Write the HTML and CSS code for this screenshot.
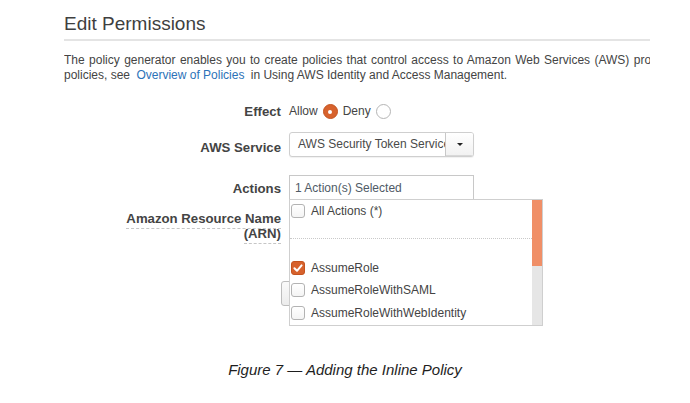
FILE: index.html
```html
<!DOCTYPE html>
<html>
<head>
<meta charset="utf-8">
<link rel="stylesheet" href="styles.css">
</head>
<body>
<div class="page">
  <h1 class="title">Edit Permissions</h1>
  <p class="intro"><span class="justified">The policy generator enables you to create policies that control access to Amazon Web Services (AWS) products and resources. For more</span><br>policies, see <a class="link" href="#">Overview of Policies</a> in Using AWS Identity and Access Management.</p>
  <div class="form">
    <div class="row row-effect">
      <div class="label">Effect</div>
      <div class="field radios">
        <span class="opt">Allow</span><span class="radio on"></span>
        <span class="opt">Deny</span><span class="radio"></span>
      </div>
    </div>
    <div class="row row-service">
      <div class="label">AWS Service</div>
      <div class="field">
        <div class="select">
          <div class="select-text">AWS Security Token Service</div>
          <div class="select-btn"><span class="caret"></span></div>
        </div>
      </div>
    </div>
    <div class="row row-actions">
      <div class="label">Actions</div>
      <div class="field actions-field">
        <div class="input">1 Action(s) Selected</div>
        <div class="menu">
          <div class="menu-list">
            <div class="item"><span class="check"></span>All Actions (*)</div>
            <div class="sep"></div>
            <div class="item"><span class="check on"><svg viewBox="0 0 14 14" width="14" height="14"><path d="M3.4 7.2 L6 9.8 L10.6 4.4" fill="none" stroke="#fff" stroke-width="2" stroke-linecap="round" stroke-linejoin="round"/></svg></span>AssumeRole</div>
            <div class="item"><span class="check"></span>AssumeRoleWithSAML</div>
            <div class="item"><span class="check"></span>AssumeRoleWithWebIdentity</div>
          </div>
          <div class="scrollbar"><div class="thumb"></div></div>
        </div>
      </div>
    </div>
    <div class="row row-arn">
      <div class="label arn-label"><span class="dotted">Amazon Resource Name<br>(ARN)</span></div>
      <div class="field"></div>
    </div>
    <div class="row row-button">
      <button class="btn" type="button">Add Statement</button>
    </div>
  </div>
</div>
<p class="caption">Figure 7 — Adding the Inline Policy</p>
</body>
</html>
```

FILE: styles.css
```css
html, body {
  margin: 0;
  padding: 0;
  background: #ffffff;
}

body {
  font-family: "Liberation Sans", Arial, sans-serif;
  color: #444;
}

.page {
  width: 586px;
  margin-left: 64px;
}

.title {
  margin: 0;
  padding: 13px 0 4px;
  font-size: 19px;
  line-height: 22px;
  font-weight: normal;
  color: #3f3f3f;
  border-bottom: 2px solid #e4e4e4;
}

.intro {
  margin: 12px 0 0;
  font-size: 12px;
  line-height: 15px;
  white-space: nowrap;
  overflow: hidden;
  color: #444;
}

.justified {
  word-spacing: 1.05px;
}

.link {
  color: #2c72b8;
  text-decoration: none;
  padding: 0 3px;
}

.form {
  position: relative;
}

.row {
  display: flex;
  align-items: flex-start;
}

.label {
  width: 217px;
  flex: none;
  text-align: right;
  font-size: 13.2px;
  font-weight: bold;
  line-height: 15px;
  color: #444;
}

.field {
  margin-left: 8px;
  font-size: 12px;
  color: #444;
}

.row-effect {
  margin-top: 20px;
  height: 17px;
}

.row-effect .label {
  line-height: 17px;
}

.radios {
  display: flex;
  align-items: center;
  height: 17px;
  line-height: 17px;
}

.opt {
  margin-right: 5px;
}

.radio {
  width: 13px;
  height: 13px;
  border-radius: 50%;
  border: 1px solid #b5b5b5;
  background: #fff;
  margin-right: 5px;
  box-sizing: content-box;
  position: relative;
}

.radio.on {
  background: #d7622d;
  border-color: #c4531f;
}

.radio.on::after {
  content: "";
  position: absolute;
  left: 4.5px;
  top: 4.5px;
  width: 4px;
  height: 4px;
  border-radius: 50%;
  background: #fff;
}

.row-service {
  margin-top: 12px;
}

.row-service .label {
  padding-top: 8px;
}

.select {
  width: 185px;
  height: 25px;
  box-sizing: border-box;
  border: 1px solid #cfcfcf;
  border-radius: 3px;
  display: flex;
  background: #fff;
  box-shadow: 0 1px 1px rgba(0, 0, 0, 0.06);
  overflow: hidden;
}

.select-text {
  flex: 1;
  min-width: 0;
  overflow: hidden;
  white-space: nowrap;
  padding-left: 8px;
  line-height: 23px;
  font-size: 12px;
  color: #4a4a4a;
}

.select-btn {
  width: 27px;
  flex: none;
  border-left: 1px solid #c8c8c8;
  background: linear-gradient(#ffffff, #f1f1f1);
  box-shadow: inset 0 -1px 0 #d8d8d8;
  display: flex;
  align-items: center;
  justify-content: center;
}

.caret {
  width: 0;
  height: 0;
  border-left: 3px solid transparent;
  border-right: 3px solid transparent;
  border-top: 3px solid #222;
}

.row-actions {
  margin-top: 18px;
}

.row-actions .label {
  padding-top: 6px;
}

.actions-field {
  position: relative;
}

.input {
  width: 185px;
  height: 25px;
  box-sizing: border-box;
  border: 1px solid #c8c8c8;
  padding-left: 5px;
  line-height: 24px;
  font-size: 12px;
  color: #4f5a66;
  background: #fff;
}

.menu {
  position: absolute;
  left: 0;
  top: 24px;
  width: 254px;
  height: 127px;
  box-sizing: border-box;
  border: 1px solid #cfcfcf;
  background: #fff;
  z-index: 2;
  display: flex;
}

.menu-list {
  flex: 1;
}

.item {
  display: flex;
  align-items: center;
  height: 22.5px;
  padding-left: 1px;
  font-size: 12px;
  color: #444;
  white-space: nowrap;
}

.check {
  width: 14px;
  height: 14px;
  box-sizing: border-box;
  border: 1px solid #b3b3b3;
  border-radius: 3px;
  background: linear-gradient(#ffffff, #f4f4f4);
  margin-right: 6px;
  flex: none;
  display: flex;
}

.check.on {
  background: #d7622d;
  border-color: #c4531f;
}

.check svg {
  margin: -1px;
}

.sep {
  margin: 15px 0 18px;
  border-top: 1px dotted #c9c9c9;
}

.scrollbar {
  width: 10px;
  flex: none;
  background: #e6e6e6;
}

.thumb {
  height: 66px;
  background: #f08f67;
}

.row-arn .label {
  padding-top: 12px;
  line-height: 14.5px;
}

.dotted {
  border-bottom: 1px dashed #c6c6c6;
  padding-bottom: 2px;
}

.row-button {
  margin-top: 40px;
  padding-left: 217px;
}

.btn {
  height: 25px;
  padding: 0 12px;
  border: 1px solid #bdbdbd;
  border-radius: 3px;
  background: linear-gradient(#fafafa, #ececec);
  font-family: "Liberation Sans", Arial, sans-serif;
  font-size: 12px;
  color: #444;
}

.caption {
  margin: 55px 0 0;
  text-align: center;
  font-size: 15px;
  line-height: 18px;
  font-style: italic;
  color: #1e1e1e;
}
```
